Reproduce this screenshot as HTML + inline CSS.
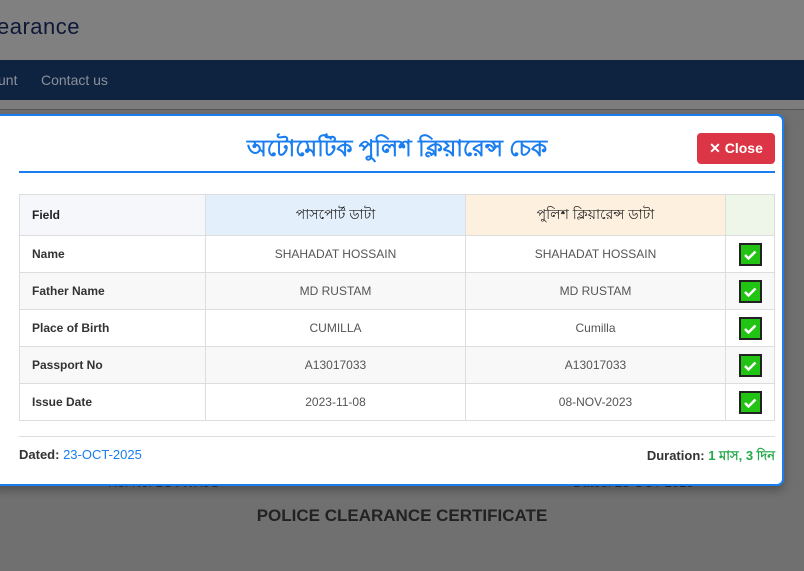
<!DOCTYPE html>
<html><head><meta charset="utf-8"><style>
*{box-sizing:border-box;margin:0;padding:0}
body{width:804px;height:571px;overflow:hidden;position:relative;background:#717071;font-family:"Liberation Sans",sans-serif}
.top{position:absolute;left:0;top:0;width:804px;height:60px;background:#808080}
.logo{position:absolute;left:-3px;top:14px;font-size:22px;color:#0e1738;letter-spacing:0.5px}
.nav{position:absolute;left:0;top:60px;width:804px;height:40px;background:#0e2340;color:#8a909a;font-size:14px}
.nav span{position:absolute;top:12px}
.band{position:absolute;left:0;top:100px;width:804px;height:10px;background:#7d7d7d;border-bottom:1px solid #555}
.bg1{position:absolute;top:475px;font-size:13px;color:#333}
.pcc{position:absolute;left:0;width:804px;top:506px;text-align:center;font-size:17px;font-weight:bold;color:#222}
.modal{position:absolute;left:-10px;top:114px;width:794px;height:372px;background:#fff;border:2px solid #1a7df0;border-radius:7px;box-shadow:0 4px 10px rgba(0,0,0,.3)}
.title{position:absolute;left:0;width:794px;top:130px;text-align:center;font-family:"Liberation Sans","Noto Sans CJK SC",sans-serif;font-size:23px;font-weight:bold;color:#1a7df0}
.hr{position:absolute;left:19px;top:171px;width:756px;height:2px;background:#1a7df0}
.close{position:absolute;left:697px;top:133px;width:78px;height:31px;background:#dc3545;border-radius:4px;color:#fff;font-weight:bold;font-size:14px;line-height:31px;text-align:center}
table{position:absolute;left:19px;top:194px;width:756px;border-collapse:collapse;font-size:12px}
td{border:1px solid #ddd;height:37px;text-align:center;color:#555}
td:first-child{text-align:left;padding-left:12px;font-weight:bold;color:#333;width:186px}
tr:first-child td{height:41px;font-size:14px;color:#222}
tr:first-child td:first-child{font-size:12px}
tr:nth-child(odd) td{background:#f8f8f8}
tr:first-child td:nth-child(1){background:#f5f7fa}
tr:first-child td:nth-child(2){background:#e3f0fc}
tr:first-child td:nth-child(3){background:#fdf0df}
tr:first-child td:nth-child(4){background:#eef6ea}
td:nth-child(2),td:nth-child(3){width:260px}
.ck{display:inline-block;width:23px;height:23px;background:#22c414;border:2px solid #222;vertical-align:middle}
.fl{position:absolute;left:19px;top:436px;width:756px;height:1px;background:#ddd}
.d{position:absolute;top:447px;font-size:13px;font-weight:bold;color:#333}
</style></head><body>
<div class="top"><div class="logo">earance</div></div>
<div class="nav"><span style="left:-2px">unt</span><span style="left:41px">Contact us</span></div>
<div class="band"></div>
<div class="bg1" style="left:108px">Ref No: 1GVWX5G</div>
<div class="bg1" style="left:573px">Dated: 23-OCT-2025</div>
<div class="pcc">POLICE CLEARANCE CERTIFICATE</div>
<div class="modal"></div>
<div class="title">অটোমেটিক পুলিশ ক্লিয়ারেন্স চেক</div>
<div class="close">✕ Close</div>
<div class="hr"></div>
<table>
<tr><td>Field</td><td>পাসপোর্ট ডাটা</td><td>পুলিশ ক্লিয়ারেন্স ডাটা</td><td></td></tr>
<tr><td>Name</td><td>SHAHADAT HOSSAIN</td><td>SHAHADAT HOSSAIN</td><td><svg class="ck" viewBox="0 0 19 19"><path d="M4 10l3.5 3.5 7-7" stroke="#fff" stroke-width="2.5" fill="none"/></svg></td></tr>
<tr><td>Father Name</td><td>MD RUSTAM</td><td>MD RUSTAM</td><td><svg class="ck" viewBox="0 0 19 19"><path d="M4 10l3.5 3.5 7-7" stroke="#fff" stroke-width="2.5" fill="none"/></svg></td></tr>
<tr><td>Place of Birth</td><td>CUMILLA</td><td>Cumilla</td><td><svg class="ck" viewBox="0 0 19 19"><path d="M4 10l3.5 3.5 7-7" stroke="#fff" stroke-width="2.5" fill="none"/></svg></td></tr>
<tr><td>Passport No</td><td>A13017033</td><td>A13017033</td><td><svg class="ck" viewBox="0 0 19 19"><path d="M4 10l3.5 3.5 7-7" stroke="#fff" stroke-width="2.5" fill="none"/></svg></td></tr>
<tr><td>Issue Date</td><td>2023-11-08</td><td>08-NOV-2023</td><td><svg class="ck" viewBox="0 0 19 19"><path d="M4 10l3.5 3.5 7-7" stroke="#fff" stroke-width="2.5" fill="none"/></svg></td></tr>
</table>
<div class="fl"></div>
<div class="d" style="left:19px">Dated: <span style="color:#1a7df0;font-weight:normal">23-OCT-2025</span></div>
<div class="d" style="right:29px;font-family:'Liberation Sans','Noto Sans CJK SC',sans-serif">Duration: <span style="color:#22a94a">1 মাস, 3 দিন</span></div>
</body></html>
